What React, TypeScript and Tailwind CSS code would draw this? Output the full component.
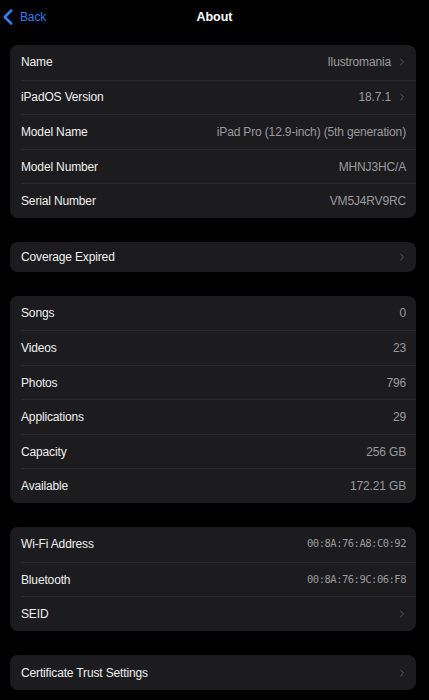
import { ChevronLeft, ChevronRight } from 'lucide-react';

type Row = { label: string; value?: string; chevron?: boolean; mono?: boolean };

const groups: { rows: Row[]; h: string }[] = [
  {
    h: 'h-[34.6px]',
    rows: [
      { label: 'Name', value: 'Ilustromania', chevron: true },
      { label: 'iPadOS Version', value: '18.7.1', chevron: true },
      { label: 'Model Name', value: 'iPad Pro (12.9-inch) (5th generation)' },
      { label: 'Model Number', value: 'MHNJ3HC/A' },
      { label: 'Serial Number', value: 'VM5J4RV9RC' },
    ],
  },
  { h: 'h-[30px]', rows: [{ label: 'Coverage Expired', chevron: true }] },
  {
    h: 'h-[34.5px]',
    rows: [
      { label: 'Songs', value: '0' },
      { label: 'Videos', value: '23' },
      { label: 'Photos', value: '796' },
      { label: 'Applications', value: '29' },
      { label: 'Capacity', value: '256 GB' },
      { label: 'Available', value: '172.21 GB' },
    ],
  },
  {
    h: 'h-[34.7px]',
    rows: [
      { label: 'Wi-Fi Address', value: '00:8A:76:A8:C0:92', mono: true },
      { label: 'Bluetooth', value: '00:8A:76:9C:06:F8', mono: true },
      { label: 'SEID', chevron: true },
    ],
  },
  { h: 'h-[35px]', rows: [{ label: 'Certificate Trust Settings', chevron: true }] },
];

const App = () => {
  return (
    <div className="min-h-[700px] bg-black text-[#efefef] font-['Liberation_Sans',sans-serif] overflow-hidden">
      <div className="relative flex h-[34px] items-center justify-center">
        <div className="absolute -left-[5px] top-[4px] flex items-center text-[#2f7ff0]">
          <ChevronLeft size={26} strokeWidth={2.3} />
          <span className="text-[12px] tracking-[-0.15px] -ml-[1px]">Back</span>
        </div>
        <span className="text-[12.5px] font-bold text-white">About</span>
      </div>

      <div className="ml-[10px] mr-[13px] mt-[11px] flex flex-col gap-[24px]">
        {groups.map((g, gi) => (
          <div key={gi} className="rounded-[8px] bg-[#1c1c1e] overflow-hidden">
            {g.rows.map((r, i) => (
              <div key={i} className={`${g.h} flex pl-[11px]`}>
                <div
                  className={`flex flex-1 items-center pr-[10px] ${i > 0 ? 'border-t border-[#2a2a2c]' : ''}`}
                >
                  <span className="text-[12px] tracking-[-0.15px]">{r.label}</span>
                  <span
                    className={`ml-auto text-[#9a9a9f] ${
                      r.mono
                        ? "font-['DejaVu_Sans_Mono',monospace] text-[10.5px] tracking-[-0.5px]"
                        : 'text-[12px] tracking-[-0.15px]'
                    }`}
                  >
                    {r.value}
                  </span>
                  {r.chevron && (
                    <ChevronRight size={12} strokeWidth={2} className="ml-[5px] -mr-[2px] text-[#5b5b60]" />
                  )}
                </div>
              </div>
            ))}
          </div>
        ))}
      </div>
    </div>
  );
};

export default App;
